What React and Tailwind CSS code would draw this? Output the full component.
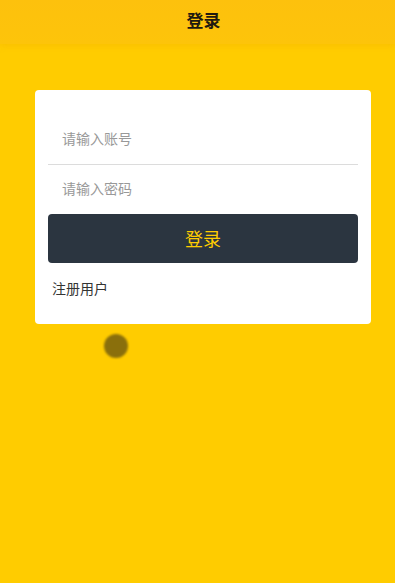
import React from "react";

export default function App() {
  return (
    <div
      className="relative min-h-[583px] w-full bg-[#ffcc00]"
      style={{ fontFamily: '"Noto Sans CJK SC", "Noto Sans", sans-serif' }}
    >
      <header className="flex h-[44px] items-center justify-center bg-gradient-to-b from-[#fdc10d] to-[#fdc40a] pb-[5px] pl-[12px] shadow-[0_2px_6px_rgba(240,170,0,0.35)]">
        <h1 className="text-[17px] font-bold text-[#1f1a10]">登录</h1>
      </header>

      <div className="pl-[35px] pr-[24px] pt-[46px]">
        <div className="rounded-[4px] bg-white px-[13px] pb-[25px] pt-[29px]">
          <input
            className="block h-[46px] w-full border-b border-[#dcdcdc] px-[14px] pb-[8px] text-[14px] text-[#333] outline-none placeholder:text-[#999]"
            placeholder="请输入账号"
          />
          <input
            type="password"
            className="block h-[49px] w-full px-[14px] pb-[4px] text-[14px] text-[#333] outline-none placeholder:text-[#999]"
            placeholder="请输入密码"
          />
          <button className="flex h-[49px] w-full items-center justify-center rounded-[4px] bg-[#2b3540] text-[18px] text-[#ffcc00]">
            登录
          </button>
          <div className="mt-[15px] px-[4px] text-[14px] text-[#333]">注册用户</div>
        </div>
      </div>

      <div className="absolute left-[104px] top-[334px] h-[24px] w-[24px] rounded-full bg-[#8a6f0c] blur-[1px]" />
    </div>
  );
}
